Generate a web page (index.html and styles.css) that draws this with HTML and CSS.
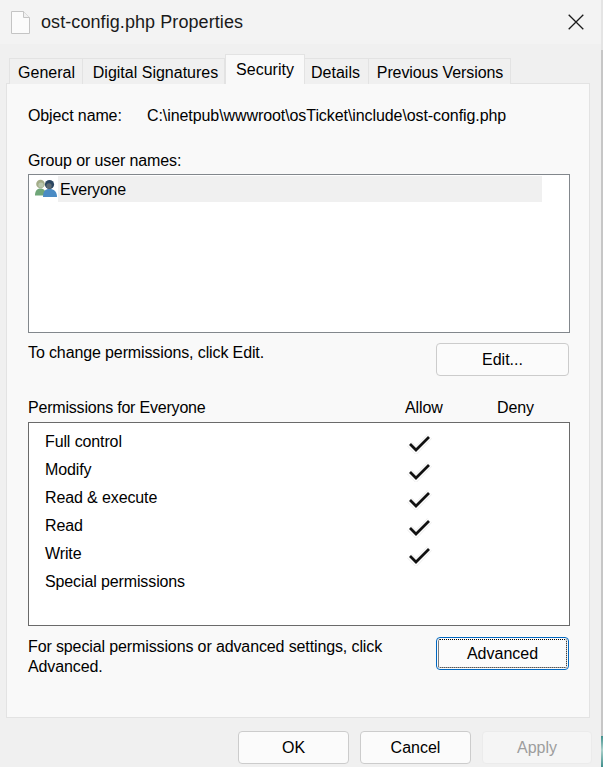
FILE: index.html
```html
<!DOCTYPE html>
<html lang="en">
<head>
    <meta charset="UTF-8">
    <meta name="viewport" content="width=device-width, initial-scale=1.0">
    <title>ost-config.php Properties</title>
    <link rel="stylesheet" href="styles.css">
</head>
<body>

    <div class="titlebar">
        <svg class="file-icon" width="19" height="23" viewBox="0 0 19 23">
            <path d="M0.5 0.5H12.5L18.5 6.5V22.5H0.5Z" fill="#fbfbfb" stroke="#c4c4c4"/>
            <path d="M12.5 0.5V6.5H18.5" fill="#f0f0f0" stroke="#c4c4c4"/>
        </svg>
        <span class="title">ost-config.php Properties</span>
        <svg class="close-icon" width="16" height="16" viewBox="0 0 16 16">
            <path d="M0.7 0.7L15.3 15.3M15.3 0.7L0.7 15.3" stroke="#1a1a1a" stroke-width="1.3" fill="none"/>
        </svg>
    </div>

    <div class="tabs">
        <div class="tab tab-general">General</div>
        <div class="tab tab-digital">Digital Signatures</div>
        <div class="tab tab-security">Security</div>
        <div class="tab tab-details">Details</div>
        <div class="tab tab-previous">Previous Versions</div>
    </div>

    <div class="panel">
        <div class="object-row">
            <span class="object-label">Object name:</span>
            <span class="object-path">C:\inetpub\wwwroot\osTicket\include\ost-config.php</span>
        </div>

        <div class="group-label">Group or user names:</div>
        <div class="listbox">
            <svg class="users-icon" width="24" height="19" viewBox="0 0 24 19">
                <path d="M1 16.5C1 12 3 9.5 6.5 9.5C10 9.5 12 12 12 16.5Z" fill="#6fa678"/>
                <circle cx="6.5" cy="5" r="4.3" fill="#a3ac88"/>
                <circle cx="7" cy="6" r="2.6" fill="#b9c7ae"/>
                <path d="M9 18C9 12.5 11 10 15.5 10C20 10 23 12.5 23 18Z" fill="#4a8bc4"/>
                <circle cx="15.5" cy="5.5" r="4.6" fill="#2a4560"/>
                <circle cx="15" cy="7" r="2.7" fill="#5d6a72"/>
            </svg>
            <div class="list-row">Everyone</div>
        </div>

        <div class="edit-row">
            <span class="edit-text">To change permissions, click Edit.</span>
            <div class="button edit-button">Edit...</div>
        </div>

        <div class="perm-header">
            <span class="perm-name">Permissions for Everyone</span>
            <span class="perm-allow">Allow</span>
            <span class="perm-deny">Deny</span>
        </div>
        <div class="perm-box">
            <div class="perm-row"><span class="perm-label">Full control</span><svg class="check" width="26" height="22" viewBox="0 0 26 22"><path d="M2.5 12L9 18.5L22.5 4.5" stroke="#ececec" stroke-width="6.5" fill="none"/><path d="M2.5 12L9 18.5L22.5 4.5" stroke="#fff" stroke-width="5" fill="none"/><path d="M3 12L9 18L22 5" stroke="#111" stroke-width="2.8" fill="none"/></svg></div>
            <div class="perm-row"><span class="perm-label">Modify</span><svg class="check" width="26" height="22" viewBox="0 0 26 22"><path d="M2.5 12L9 18.5L22.5 4.5" stroke="#ececec" stroke-width="6.5" fill="none"/><path d="M2.5 12L9 18.5L22.5 4.5" stroke="#fff" stroke-width="5" fill="none"/><path d="M3 12L9 18L22 5" stroke="#111" stroke-width="2.8" fill="none"/></svg></div>
            <div class="perm-row"><span class="perm-label">Read &amp; execute</span><svg class="check" width="26" height="22" viewBox="0 0 26 22"><path d="M2.5 12L9 18.5L22.5 4.5" stroke="#ececec" stroke-width="6.5" fill="none"/><path d="M2.5 12L9 18.5L22.5 4.5" stroke="#fff" stroke-width="5" fill="none"/><path d="M3 12L9 18L22 5" stroke="#111" stroke-width="2.8" fill="none"/></svg></div>
            <div class="perm-row"><span class="perm-label">Read</span><svg class="check" width="26" height="22" viewBox="0 0 26 22"><path d="M2.5 12L9 18.5L22.5 4.5" stroke="#ececec" stroke-width="6.5" fill="none"/><path d="M2.5 12L9 18.5L22.5 4.5" stroke="#fff" stroke-width="5" fill="none"/><path d="M3 12L9 18L22 5" stroke="#111" stroke-width="2.8" fill="none"/></svg></div>
            <div class="perm-row"><span class="perm-label">Write</span><svg class="check" width="26" height="22" viewBox="0 0 26 22"><path d="M2.5 12L9 18.5L22.5 4.5" stroke="#ececec" stroke-width="6.5" fill="none"/><path d="M2.5 12L9 18.5L22.5 4.5" stroke="#fff" stroke-width="5" fill="none"/><path d="M3 12L9 18L22 5" stroke="#111" stroke-width="2.8" fill="none"/></svg></div>
            <div class="perm-row"><span class="perm-label">Special permissions</span></div>
        </div>

        <div class="advanced-row">
            <span class="advanced-text">For special permissions or advanced settings, click Advanced.</span>
            <div class="button advanced-button"><div class="focus-ring">Advanced</div></div>
        </div>
    </div>

    <div class="footer">
        <div class="button footer-button">OK</div>
        <div class="button footer-button">Cancel</div>
        <div class="button footer-button disabled">Apply</div>
    </div>

    <div class="window-edge"></div>

</body>
</html>
```

FILE: styles.css
```css
body {
    font-family: 'Liberation Sans', Arial, sans-serif;
    font-size: 16px;
    background-color: #f0f0f0;
    color: #000;
    margin: 0;
    padding: 0;
    height: 767px;
    overflow: hidden;
    position: relative;
}
.titlebar {
    height: 44px;
    background-color: #f3f3f3;
    display: flex;
    align-items: center;
    padding: 0 19px 0 11px;
}
.file-icon {
    margin-right: 11px;
}
.title {
    font-size: 18px;
    letter-spacing: 0.08px;
    color: #1a1a1a;
    flex: 1;
}
.tabs {
    display: flex;
    align-items: flex-end;
    height: 40px;
    padding-left: 9px;
    margin-bottom: -1px;
    position: relative;
}
.tab {
    height: 26px;
    line-height: 27px;
    border: 1px solid #e3e3e3;
    border-bottom: none;
    background-color: #f0f0f0;
    text-align: center;
    box-sizing: border-box;
}
.tab-general { width: 74px; padding-left: 1px; }
.tab-digital { width: 142px; border-left: none; padding-left: 4px; }
.tab-security {
    width: 80px;
    height: 30px;
    line-height: 30px;
    background-color: #f9f9f9;
    position: relative;
    z-index: 1;
}
.tab-details { width: 64px; border-left: none; padding-right: 2px; }
.tab-previous { width: 142px; border-left: none; padding-left: 1px; letter-spacing: -0.1px; }
.panel {
    width: 584px;
    height: 635px;
    margin-left: 6px;
    box-sizing: border-box;
    background-color: #f9f9f9;
    border: 1px solid #e3e3e3;
    padding: 0 19px 0 21px;
    letter-spacing: -0.12px;
}
.object-row {
    display: flex;
    padding-top: 23px;
    height: 18px;
    line-height: 18px;
}
.object-label {
    width: 119px;
}
.object-path {
    letter-spacing: -0.08px;
}
.group-label {
    margin-top: 27px;
    height: 18px;
    line-height: 18px;
}
.listbox {
    margin-top: 4px;
    height: 159px;
    box-sizing: border-box;
    background-color: #fff;
    border: 1px solid #82878c;
    padding: 1px 27px 0 29px;
    position: relative;
}
.users-icon {
    position: absolute;
    left: 5px;
    top: 4px;
}
.list-row {
    height: 26px;
    line-height: 28px;
    background-color: #f0f0f0;
    padding-left: 2px;
    letter-spacing: -0.2px;
}
.edit-row {
    display: flex;
    justify-content: space-between;
    align-items: flex-start;
    margin-top: 10px;
    line-height: 18px;
}
.edit-text {
    margin-top: 1px;
}
.button {
    width: 133px;
    height: 33px;
    box-sizing: border-box;
    background-color: #fbfbfb;
    border: 1px solid #cccccc;
    border-radius: 4px;
    text-align: center;
    line-height: 31px;
    letter-spacing: 0;
}
.edit-button {
    margin-right: 1px;
}
.perm-header {
    display: flex;
    margin-top: 23px;
    height: 18px;
    line-height: 18px;
}
.perm-name {
    width: 377px;
    letter-spacing: -0.2px;
}
.perm-allow {
    width: 92px;
}
.perm-box {
    margin-top: 5px;
    height: 204px;
    box-sizing: border-box;
    background-color: #fff;
    border: 1px solid #6a6a6a;
    padding: 5px 0 0 16px;
}
.perm-row {
    display: flex;
    align-items: center;
    height: 28px;
}
.perm-label {
    width: 362px;
}
.check {
    margin-top: 2px;
}
.advanced-row {
    display: flex;
    justify-content: space-between;
    margin-top: 11px;
}
.advanced-text {
    width: 390px;
    line-height: 20px;
}
.advanced-button {
    border-color: #0067c0;
    padding: 1px;
    line-height: 27px;
    margin-right: 1px;
}
.focus-ring {
    height: 29px;
    box-sizing: border-box;
    border: 1px dotted #000;
    border-radius: 2px;
}
.footer {
    display: flex;
    gap: 11px;
    margin-top: 13px;
    padding-left: 238px;
}
.footer-button {
    width: 111px;
}
.disabled {
    width: 110px;
    color: #9d9d9d;
    background-color: #f5f5f5;
    border-color: #ebebeb;
}
.window-edge {
    position: absolute;
    top: 0;
    right: 0;
    width: 2px;
    height: 767px;
    background: linear-gradient(to bottom, #e4e4e4 0, #e4e4e4 50px, #c6c6c6 50px, #c6c6c6 736px, #3f8f8c 736px, #a9cfc9 750px, #3f8f8c 767px);
}
```
